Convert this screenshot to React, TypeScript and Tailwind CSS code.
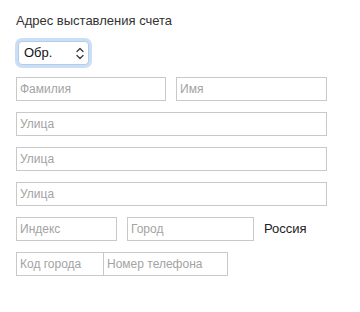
const inputCls =
  "h-[24px] border border-[#c9c9c9] bg-white px-[3px] text-[12px] text-[#333] placeholder:text-[#a3a3a3] outline-none";

export default function App() {
  return (
    <div className="w-[360px] h-[312px] bg-white pl-4 pt-[13px] font-['Liberation_Sans',Arial,sans-serif]">
      <h2 className="text-[13px] leading-[16px] text-[#333]">Адрес выставления счета</h2>

      {/* Salutation select with focus glow */}
      <div className="mt-[9px] ml-[-1px] w-[77px] h-[30px] rounded-[7px] bg-[#cadff5] p-[3px]">
        <div className="h-full rounded-[4px] border border-[#b3cde9] bg-white flex items-center justify-between pl-[5px] pr-[4px]">
          <span className="text-[13px] text-[#111]">Обр.</span>
          <svg width="8" height="13" viewBox="0 0 8 13" fill="none" stroke="#3a3a3a" strokeWidth="1.3" strokeLinecap="round" strokeLinejoin="round">
            <path d="M1 4.5 L4 1.5 L7 4.5" />
            <path d="M1 8.5 L4 11.5 L7 8.5" />
          </svg>
        </div>
      </div>

      <div className="mt-[9px] flex flex-col gap-[11px] w-[311px]">
        <div className="flex gap-[10px]">
          <input className={`${inputCls} w-[150px]`} placeholder="Фамилия" />
          <input className={`${inputCls} w-[151px]`} placeholder="Имя" />
        </div>
        <input className={`${inputCls} w-[311px]`} placeholder="Улица" />
        <input className={`${inputCls} w-[311px]`} placeholder="Улица" />
        <input className={`${inputCls} w-[311px]`} placeholder="Улица" />
        <div className="flex items-center">
          <input className={`${inputCls} w-[101px]`} placeholder="Индекс" />
          <input className={`${inputCls} w-[127px] ml-[10px]`} placeholder="Город" />
          <span className="ml-[10px] text-[13px] text-[#222]">Россия</span>
        </div>
        <div className="flex">
          <input className={`${inputCls} w-[88px]`} placeholder="Код города" />
          <input className={`${inputCls} w-[125px] -ml-px`} placeholder="Номер телефона" />
        </div>
      </div>
    </div>
  );
}
